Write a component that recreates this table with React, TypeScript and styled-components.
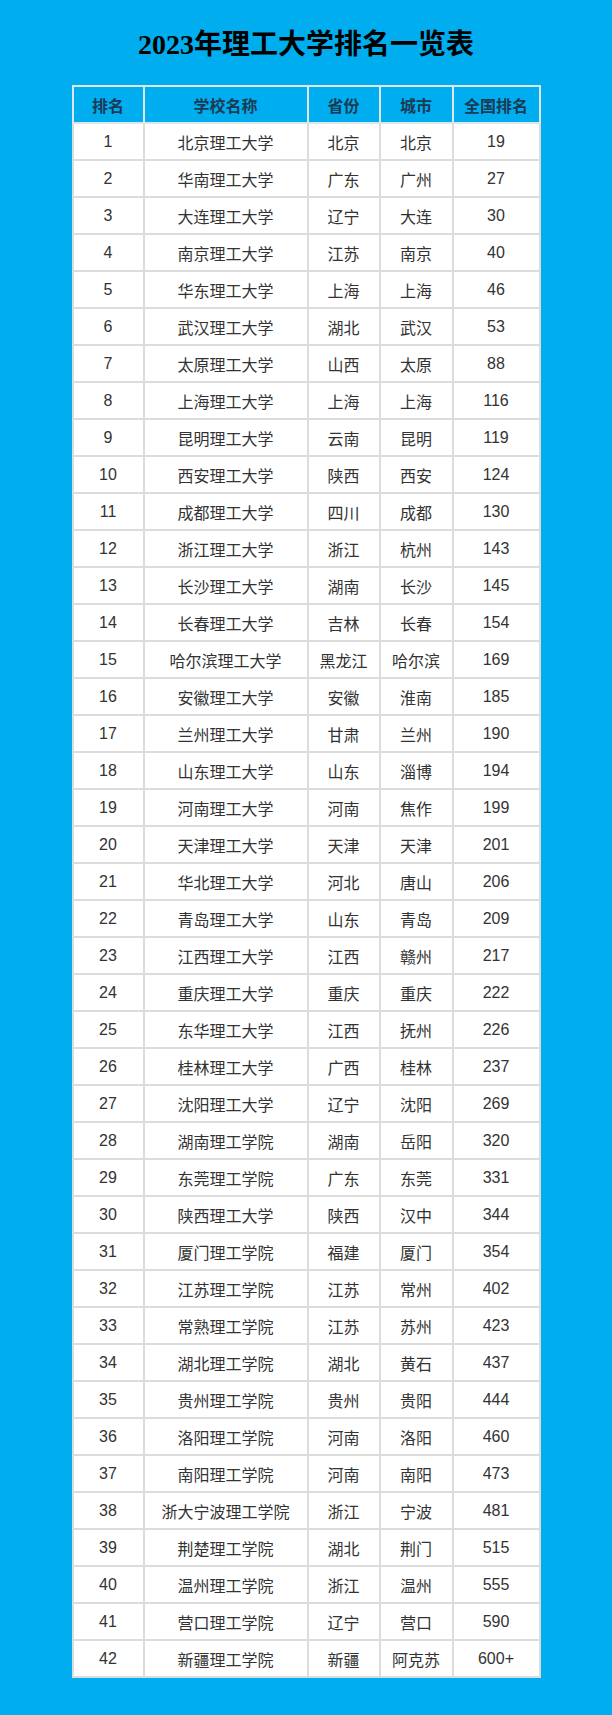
import React from 'react'
import styled, { createGlobalStyle } from 'styled-components'

type School = [number, string, string, string, string]

const schools: School[] = [
  [1, '北京理工大学', '北京', '北京', '19'],
  [2, '华南理工大学', '广东', '广州', '27'],
  [3, '大连理工大学', '辽宁', '大连', '30'],
  [4, '南京理工大学', '江苏', '南京', '40'],
  [5, '华东理工大学', '上海', '上海', '46'],
  [6, '武汉理工大学', '湖北', '武汉', '53'],
  [7, '太原理工大学', '山西', '太原', '88'],
  [8, '上海理工大学', '上海', '上海', '116'],
  [9, '昆明理工大学', '云南', '昆明', '119'],
  [10, '西安理工大学', '陕西', '西安', '124'],
  [11, '成都理工大学', '四川', '成都', '130'],
  [12, '浙江理工大学', '浙江', '杭州', '143'],
  [13, '长沙理工大学', '湖南', '长沙', '145'],
  [14, '长春理工大学', '吉林', '长春', '154'],
  [15, '哈尔滨理工大学', '黑龙江', '哈尔滨', '169'],
  [16, '安徽理工大学', '安徽', '淮南', '185'],
  [17, '兰州理工大学', '甘肃', '兰州', '190'],
  [18, '山东理工大学', '山东', '淄博', '194'],
  [19, '河南理工大学', '河南', '焦作', '199'],
  [20, '天津理工大学', '天津', '天津', '201'],
  [21, '华北理工大学', '河北', '唐山', '206'],
  [22, '青岛理工大学', '山东', '青岛', '209'],
  [23, '江西理工大学', '江西', '赣州', '217'],
  [24, '重庆理工大学', '重庆', '重庆', '222'],
  [25, '东华理工大学', '江西', '抚州', '226'],
  [26, '桂林理工大学', '广西', '桂林', '237'],
  [27, '沈阳理工大学', '辽宁', '沈阳', '269'],
  [28, '湖南理工学院', '湖南', '岳阳', '320'],
  [29, '东莞理工学院', '广东', '东莞', '331'],
  [30, '陕西理工大学', '陕西', '汉中', '344'],
  [31, '厦门理工学院', '福建', '厦门', '354'],
  [32, '江苏理工学院', '江苏', '常州', '402'],
  [33, '常熟理工学院', '江苏', '苏州', '423'],
  [34, '湖北理工学院', '湖北', '黄石', '437'],
  [35, '贵州理工学院', '贵州', '贵阳', '444'],
  [36, '洛阳理工学院', '河南', '洛阳', '460'],
  [37, '南阳理工学院', '河南', '南阳', '473'],
  [38, '浙大宁波理工学院', '浙江', '宁波', '481'],
  [39, '荆楚理工学院', '湖北', '荆门', '515'],
  [40, '温州理工学院', '浙江', '温州', '555'],
  [41, '营口理工学院', '辽宁', '营口', '590'],
  [42, '新疆理工学院', '新疆', '阿克苏', '600+'],
]

const columns = [
  { title: '排名', width: 71 },
  { title: '学校名称', width: 164 },
  { title: '省份', width: 72 },
  { title: '城市', width: 73 },
  { title: '全国排名', width: 87 },
]

const GlobalStyle = createGlobalStyle`
  html, body {
    margin: 0;
    padding: 0;
    background: #00aeef;
  }
`

const Page = styled.div`
  width: 612px;
  height: 1715px;
  box-sizing: border-box;
  padding-top: 25px;
  background: #00aeef;
  font-family: "Liberation Sans", Arial, "Noto Sans CJK SC", sans-serif;
`

const Title = styled.h1`
  margin: 0 0 20px;
  height: 40px;
  line-height: 40px;
  text-align: center;
  font-family: "Liberation Serif", "Noto Sans CJK SC", serif;
  font-size: 28px;
  font-weight: bold;
  color: #000;
`

const Table = styled.table`
  width: 467px;
  margin: 0 auto;
  border-collapse: collapse;
  table-layout: fixed;
  background: #fff;
  border: 2px solid #e2e8ec;
`

const HeadCell = styled.th`
  height: 35px;
  padding: 0;
  border: 2px solid #dde6ea;
  background: #00aeef;
  color: #1b3a55;
  font-size: 16px;
  font-weight: bold;
  text-align: center;
  vertical-align: middle;
`

const Cell = styled.td`
  height: 35px;
  padding: 0;
  border: 2px solid #dcdcdc;
  color: #333;
  font-size: 16px;
  text-align: center;
  vertical-align: middle;
  white-space: nowrap;
`

const App = () => {
  return (
    <Page>
      <GlobalStyle />
      <Title>2023年理工大学排名一览表</Title>
      <Table>
        <colgroup>
          {columns.map((c) => (
            <col key={c.title} style={{ width: c.width }} />
          ))}
        </colgroup>
        <thead>
          <tr>
            {columns.map((c) => (
              <HeadCell key={c.title}>{c.title}</HeadCell>
            ))}
          </tr>
        </thead>
        <tbody>
          {schools.map(([rank, name, province, city, national]) => (
            <tr key={rank}>
              <Cell>{rank}</Cell>
              <Cell>{name}</Cell>
              <Cell>{province}</Cell>
              <Cell>{city}</Cell>
              <Cell>{national}</Cell>
            </tr>
          ))}
        </tbody>
      </Table>
    </Page>
  )
}

export default App
